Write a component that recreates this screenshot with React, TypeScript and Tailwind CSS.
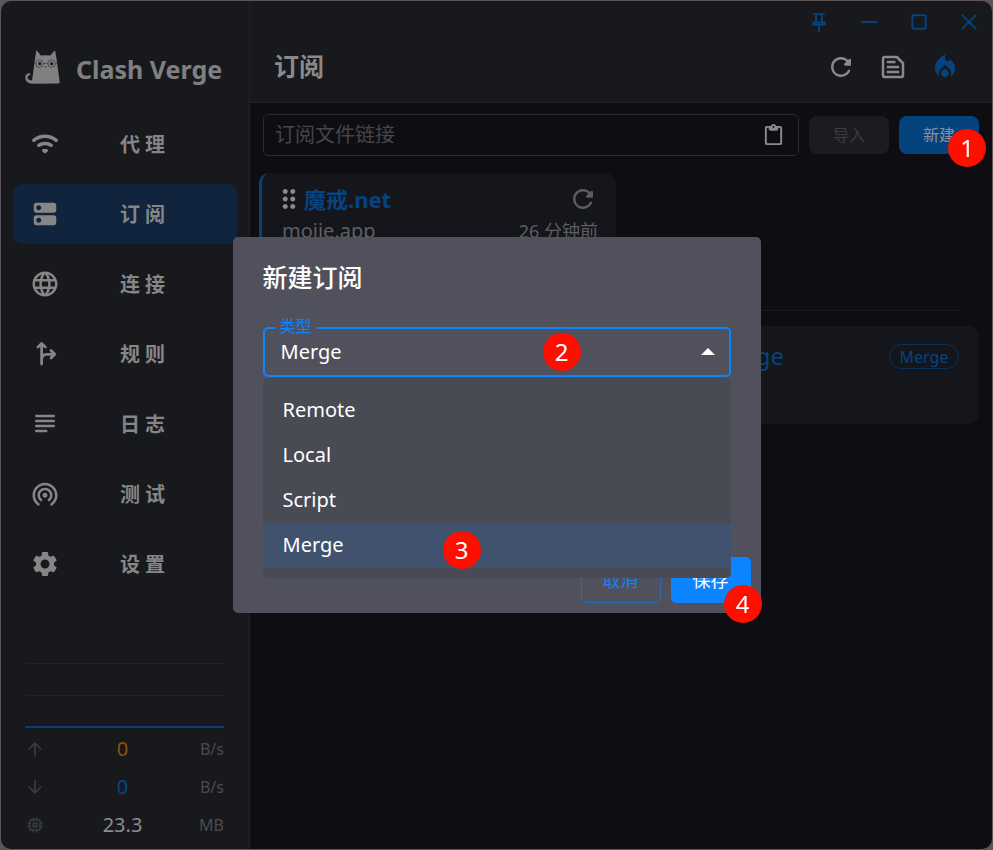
import { useState, type ReactNode } from "react";
import {
  MdDragIndicator,
  MdLanguage,
  MdLocalFireDepartment,
  MdOutlineMemory,
  MdSettings,
  MdWifiTethering,
} from "react-icons/md";

function Glyph({ d, size = 30 }: { d: string; size?: number }) {
  return (
    <svg viewBox="0 0 24 24" width={size} height={size} fill="currentColor" aria-hidden="true">
      <path d={d} />
    </svg>
  );
}

function Strokes({ children, size = 20, width = 1.8 }: { children: ReactNode; size?: number; width?: number }) {
  return (
    <svg
      viewBox="0 0 24 24"
      width={size}
      height={size}
      fill="none"
      stroke="currentColor"
      strokeWidth={width}
      strokeLinecap="round"
      strokeLinejoin="round"
      aria-hidden="true"
    >
      {children}
    </svg>
  );
}

const WIFI =
  "M2.06 10.06c.51.51 1.32.56 1.87.1 4.67-3.84 11.45-3.84 16.13-.01.56.46 1.38.42 1.89-.09.59-.59.55-1.57-.1-2.1-5.71-4.67-13.97-4.67-19.69 0-.65.52-.7 1.5-.1 2.1zm7.76 7.76 1.47 1.47c.39.39 1.02.39 1.41 0l1.47-1.47c.47-.47.37-1.28-.23-1.59-1.22-.63-2.68-.63-3.91 0-.57.31-.68 1.12-.21 1.59zm-3.73-3.73c.49.49 1.26.54 1.83.13 2.44-1.73 5.72-1.73 8.16 0 .57.4 1.34.36 1.83-.13l.01-.01c.6-.6.56-1.62-.13-2.11-3.44-2.49-8.13-2.49-11.58 0-.69.5-.73 1.51-.12 2.12z";
const SERVER =
  "M19 13H5c-1.1 0-2 .9-2 2v4c0 1.1.9 2 2 2h14c1.1 0 2-.9 2-2v-4c0-1.1-.9-2-2-2zM7 19c-1.1 0-2-.9-2-2s.9-2 2-2 2 .9 2 2-.9 2-2 2zM19 3H5c-1.1 0-2 .9-2 2v4c0 1.1.9 2 2 2h14c1.1 0 2-.9 2-2V5c0-1.1-.9-2-2-2zM7 9c-1.1 0-2-.9-2-2s.9-2 2-2 2 .9 2 2-.9 2-2 2z";
const REFRESH =
  "M17.65 6.35c-1.63-1.63-3.94-2.57-6.48-2.31-3.67.37-6.69 3.35-7.1 7.02C3.52 15.91 7.27 20 12 20c3.19 0 5.93-1.87 7.21-4.56.32-.67-.16-1.44-.9-1.44-.37 0-.72.2-.88.53-1.13 2.43-3.84 3.97-6.8 3.31-2.22-.49-4.01-2.3-4.48-4.52C5.31 9.44 8.26 6 12 6c1.66 0 3.14.69 4.22 1.78l-1.51 1.51c-.63.63-.19 1.71.7 1.71H19c.55 0 1-.45 1-1V6.41c0-.89-1.08-1.34-1.71-.71l-.64.65z";
const PASTE =
  "M19 2h-4.180C14.400.84 13.300 0 12 0S9.600.84 9.180 2H5c-1.100 0-2 .9-2 2v16c0 1.100.9 2 2 2h14c1.100 0 2-.9 2-2V4c0-1.100-.9-2-2-2zm-7 0c.55 0 1 .45 1 1s-.45 1-1 1-1-.45-1-1 .45-1 1-1zm6 18H6c-.55 0-1-.45-1-1V5c0-.55.45-1 1-1h1v1c0 1.100.9 2 2 2h6c1.100 0 2-.9 2-2V4h1c.55 0 1 .45 1 1v14c0 .55-.45 1-1 1z";

function CatLogo() {
  return (
    <svg viewBox="0 0 104 100" width="35" height="34" aria-hidden="true">
      <path
        fill="#808080"
        d="M33 2q2-2 4 1l10 13q12-2 28 0L86 3q3-3 4 1l4 24 9 66q1 5-4 5l-77 1C10 99 1 93 1 83 0 74 7 68 15 69l1 4c-6 1-9 5-8 10 1 5 6 7 13 7L30 24z"
      />
      <g fill="none" stroke="#33353a" strokeWidth="2">
        <circle cx="43" cy="40" r="11" />
        <circle cx="79" cy="40" r="11" />
        <path d="M54 40h14M28 39h4M90 39h5" />
        <path d="M57 49q4 3 8 0" />
      </g>
      <g fill="#17191d">
        <circle cx="44" cy="40" r="4.5" />
        <circle cx="79" cy="40" r="4.5" />
      </g>
    </svg>
  );
}

const navItems: { label: string; icon: ReactNode; active?: boolean }[] = [
  { label: "代 理", icon: <Glyph d={WIFI} /> },
  { label: "订 阅", icon: <Glyph d={SERVER} />, active: true },
  { label: "连 接", icon: <MdLanguage size={30} /> },
  {
    label: "规 则",
    icon: (
      <Strokes size={30} width={2.2}>
        <path d="M9.500 20V5M6.500 6.500l3-3 3 3M9.500 17c0-3.500 1.200-4.800 4-4.800h6M17 9.200l3 3-3 3" transform="translate(-.2 0)" />
      </Strokes>
    ),
  },
  {
    label: "日 志",
    icon: (
      <Strokes size={30} width={2}>
        <path d="M5 5h14M5 9h14M5 13h14M5 17h8" transform="translate(0 .5)" />
      </Strokes>
    ),
  },
  { label: "测 试", icon: <MdWifiTethering size={30} /> },
  { label: "设 置", icon: <MdSettings size={30} /> },
];

const stats = [
  {
    value: "0",
    unit: "B/s",
    color: "text-[#8b5308]",
    icon: <Strokes width={2}><path d="M12 20V5M5 12l7-7 7 7" /></Strokes>,
  },
  {
    value: "0",
    unit: "B/s",
    color: "text-[#064686]",
    icon: <Strokes width={2}><path d="M12 4v15M5 12l7 7 7-7" /></Strokes>,
  },
  { value: "23.3", unit: "MB", color: "text-[#8c8c8e]", icon: <MdOutlineMemory size={20} /> },
];

function Sidebar() {
  return (
    <aside className="flex w-[249px] shrink-0 flex-col border-r border-[#202226] bg-[#17191d] pb-[5px]">
      <div className="flex items-center gap-4 pt-[49px] pl-6">
        <CatLogo />
        <span className="pt-1 text-[25px] leading-[30px] font-bold text-[#808080]">Clash Verge</span>
      </div>
      <nav className="mt-[30px] flex flex-col gap-[10px] px-3">
        {navItems.map((item) => (
          <a
            key={item.label}
            href="#"
            className={
              item.active
                ? "flex h-[60px] items-center rounded-[10px] bg-[#10243e] pr-3 pl-[17px] text-[#868686]"
                : "flex h-[60px] items-center rounded-[10px] pr-3 pl-[17px] text-[#868686]"
            }
          >
            {item.icon}
            <span className="flex-1 pt-0.5 text-center text-xl font-bold">{item.label}</span>
          </a>
        ))}
      </nav>
      <div className="mt-auto mr-[25px] ml-6">
        <div className="border-t border-[#202226]" />
        <div className="mt-[31px] border-t border-[#202226]" />
        <div className="mt-[30px] mb-[2px] border-t-2 border-[#0a3d73]" />
        {stats.map((row, i) => (
          <div key={i} className="flex h-[38px] items-center text-[#3a3c40]">
            {row.icon}
            <span className={`flex-1 text-center text-xl ${row.color}`}>{row.value}</span>
            <span className="flex w-6 justify-end text-base text-[#4a4b4e]">{row.unit}</span>
          </div>
        ))}
      </div>
    </aside>
  );
}

function Badge({ n, place }: { n: number; place: string }) {
  return (
    <span
      className={`absolute z-10 flex size-[38px] items-center justify-center rounded-full bg-[#ff0f00] text-2xl text-white ${place}`}
    >
      {n}
    </span>
  );
}

function Header() {
  return (
    <header className="h-[102px] border-b border-[#202226] bg-[#17191d]">
      <div className="flex h-[42px] items-center justify-end gap-[30px] pr-[13px] text-[#06437f]">
        <button aria-label="置顶">
          <Strokes width={2.2}>
            <path d="M6 2.500h12M8.500 3v9M15.500 3v9M5 15v-2.500h14V15zM12 15v8" />
          </Strokes>
        </button>
        <button aria-label="最小化">
          <Strokes width={2.2}><path d="M3.500 12h17" /></Strokes>
        </button>
        <button aria-label="最大化">
          <Strokes width={2.400}><rect x="4" y="4" width="16" height="16" rx="1" /></Strokes>
        </button>
        <button aria-label="关闭">
          <Strokes width={2.2}><path d="M4 4l16 16M20 4L4 20" /></Strokes>
        </button>
      </div>
      <div className="flex h-12 items-center justify-between pr-8 pl-6 text-[#8a8a8b]">
        <h1 className="text-[25px] font-bold">订阅</h1>
        <div className="flex items-center gap-[22px]">
          <button aria-label="更新全部"><Glyph d={REFRESH} /></button>
          <button aria-label="配置">
            <Strokes size={30} width={2}>
              <path d="M5.500 4h9.500l5 5v9.500c0 .8-.7 1.500-1.500 1.500h-13c-.8 0-1.500-.7-1.500-1.500v-13c0-.8.7-1.500 1.500-1.500z" />
              <path d="M7 8h7M7 12h10M7 16h10" strokeLinecap="butt" />
            </Strokes>
          </button>
          <button aria-label="重新激活" className="text-[#06437f]"><MdLocalFireDepartment size={30} /></button>
        </div>
      </div>
    </header>
  );
}

function Profiles() {
  return (
    <main className="flex-1 bg-[#0e0d12] pt-[11px] pr-[13px] pl-[9px]">
      <div className="flex items-center gap-[10px] pl-1">
        <div className="flex h-[42px] flex-1 items-center rounded-[5px] border border-[#2b2a2f] pr-[13px] pl-[11px]">
          <input
            aria-label="订阅文件链接"
            placeholder="订阅文件链接"
            className="min-w-0 flex-1 bg-transparent text-xl text-[#8a8a8b] outline-none placeholder:text-[#46464a]"
          />
          <button aria-label="粘贴" className="text-[#8a8a8b]"><Glyph d={PASTE} size={23} /></button>
        </div>
        <button className="h-[38px] w-20 rounded-lg bg-[#1b1c20] text-base text-[#3c3d41]">导入</button>
        <button className="relative h-[38px] w-20 rounded-lg bg-[#05437f] text-base text-[#8a9098]">
          新建
          <Badge n={1} place="-right-[7px] top-[13px]" />
        </button>
      </div>
      <div className="mt-[17px] grid grid-cols-2 gap-[6px]">
        <article className="h-[98px] rounded-[10px] border-l-[3px] border-[#05437f] bg-[#15161b] pt-[10px] pr-[18px] pl-3">
          <div className="flex h-8 items-center text-[#06437f]">
            <MdDragIndicator size={30} className="text-[#8a8a8b]" />
            <h2 className="flex-1 text-[22px] leading-[30px] font-bold">魔戒.net</h2>
            <button aria-label="更新" className="text-[#5c5d60]"><Glyph d={REFRESH} /></button>
          </div>
          <div className="flex justify-between pt-px pl-2 text-[#5e5f62]">
            <span className="text-xl leading-[30px]">mojie.app</span>
            <span className="text-lg leading-[30px]">26 分钟前</span>
          </div>
        </article>
      </div>
      <div className="mt-[39px] mr-5 ml-5 border-t border-[#18181d]" />
      <div className="mt-[15px] grid grid-cols-2 gap-[6px]">
        <article className="col-start-2 flex h-[98px] items-start justify-between rounded-[10px] bg-[#15161b] pt-[14px] pr-5 pl-[10px] text-[#06437f]">
          <h2 className="text-2xl leading-8">Global Merge</h2>
          <span className="mt-1 flex h-[25px] w-[70px] items-center justify-center rounded-full border border-[#08325c] text-base">
            Merge
          </span>
        </article>
      </div>
    </main>
  );
}

const types = ["Remote", "Local", "Script", "Merge"];

function NewProfileDialog() {
  const [type, setType] = useState("Merge");
  return (
    <div className="fixed inset-0 flex items-center justify-center">
      <section
        role="dialog"
        aria-labelledby="dialog-title"
        className="relative flex h-[376px] w-[528px] flex-col rounded-[5px] bg-[#51515d] px-[30px] pt-5 pb-[10px]"
      >
        <h2 id="dialog-title" className="text-[25px] leading-[40px] font-medium text-white">新建订阅</h2>
        <div className="relative mt-[30px] h-[50px]">
          <label htmlFor="type" className="absolute -top-[9px] left-3 bg-[#51515d] px-[5px] text-base leading-4 text-[#0b84ff]">
            类型
          </label>
          <select
            id="type"
            value={type}
            onChange={(e) => setType(e.target.value)}
            className="h-full w-full appearance-none rounded-[5px] border-2 border-[#0b84ff] bg-transparent px-4 text-xl text-white outline-none"
          >
            {types.map((t) => (
              <option key={t}>{t}</option>
            ))}
          </select>
          <svg className="pointer-events-none absolute top-[21px] right-4" width="14" height="7" viewBox="0 0 14 7" aria-hidden="true">
            <path d="M0 7l7-7 7 7z" fill="#fff" />
          </svg>
          <Badge n={2} place="left-[280px] top-[6px]" />
          <ul role="listbox" aria-label="类型" className="absolute inset-x-0 top-[51px] z-10 rounded-[5px] bg-[#484a54] py-[10px]">
            {types.map((t) => (
              <li
                key={t}
                role="option"
                aria-selected={t === type}
                onClick={() => setType(t)}
                className={
                  t === type
                    ? "relative flex h-[45px] items-center bg-[#40526d] px-5 pb-0.5 text-xl text-white"
                    : "relative flex h-[45px] items-center px-5 pb-0.5 text-xl text-white"
                }
              >
                {t}
                {t === type && <Badge n={3} place="left-[180px] top-2" />}
              </li>
            ))}
          </ul>
        </div>
        <div className="-mr-5 mt-auto flex justify-end gap-[10px]">
          <button className="h-[46px] w-20 rounded-[5px] border border-[#2c6ab2] text-lg text-[#1a7fec]">取消</button>
          <button className="relative h-[46px] w-20 rounded-[5px] bg-[#0b84ff] text-lg text-white">
            保存
            <Badge n={4} place="-right-[11px] top-7" />
          </button>
        </div>
      </section>
    </div>
  );
}

export default function App() {
  return (
    <div className="flex min-h-screen bg-[#5d5557] p-px font-['Noto_Sans','Noto_Sans_CJK_SC',sans-serif]">
      <div className="flex flex-1 overflow-hidden rounded-[10px]">
        <Sidebar />
        <div className="flex min-w-0 flex-1 flex-col">
          <Header />
          <Profiles />
        </div>
      </div>
      <NewProfileDialog />
    </div>
  );
}
